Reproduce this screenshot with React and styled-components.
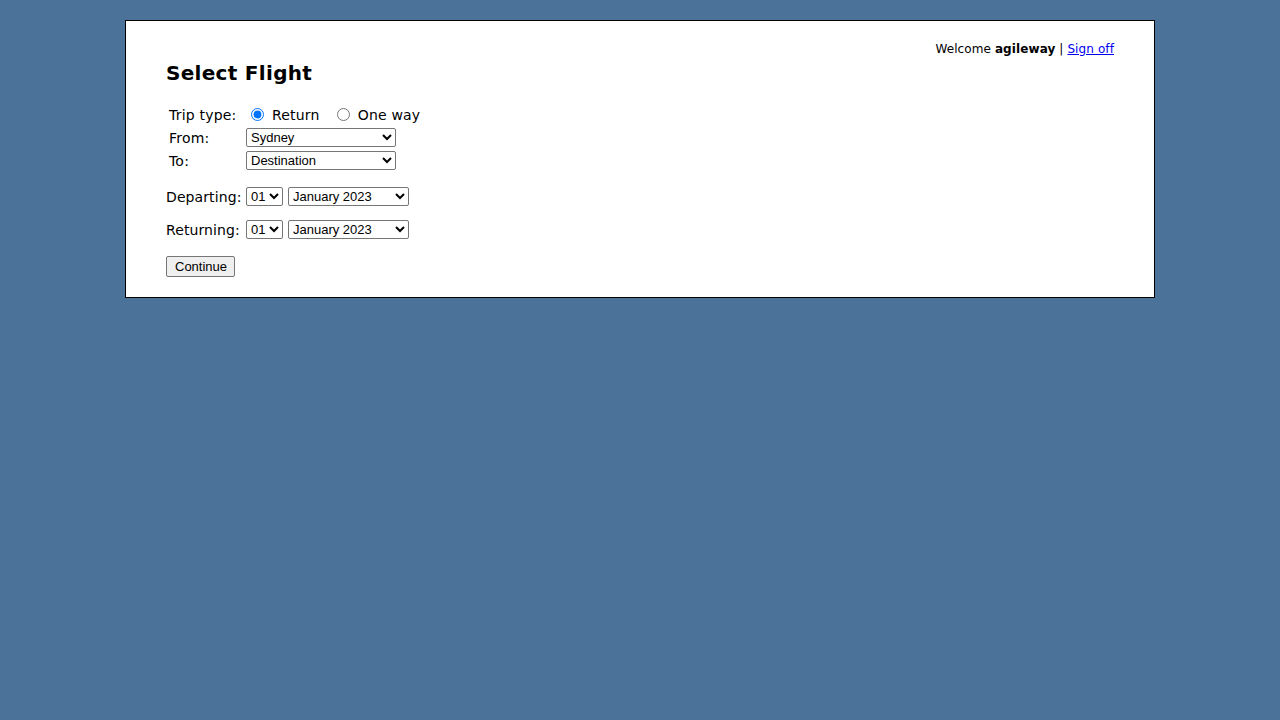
import styled, { createGlobalStyle } from 'styled-components';

const GlobalStyle = createGlobalStyle`
	body {
		margin: 0;
		padding: 20px 0;
		background: #4b7298;
		font-family: "DejaVu Sans", Verdana, sans-serif;
	}
`

const Panel = styled.div`
	width: 948px;
	margin: 0 auto;
	background: #fff;
	border: 1px solid #000;
	padding: 21px 40px 20px 40px;
`

const TopBar = styled.div`
	display: flex;
	justify-content: flex-end;
	font-size: 12px;
	line-height: 14px;
	letter-spacing: 0.1px;
	color: #000;
	a { color: #0000ee; }
	b { font-weight: bold; }
`

const Title = styled.h2`
	margin: 5px 0 17px;
	font-size: 20px;
	line-height: 24px;
	font-weight: bold;
	letter-spacing: 0.3px;
`

const FormTable = styled.table`
	border-spacing: 2px;
	margin: 0 0 14px 0;
	font-size: 14px;
	letter-spacing: 0.2px;
	td { padding: 1px; height: 19px; }
`

const LabelCell = styled.td`
	width: 68px;
	padding-right: 6px !important;
`

const RadioLabel = styled.label`
	margin-right: 12px;
	input { margin: 0 8px 0 5px; vertical-align: -1px; }
`

const Select = styled.select`
	font-family: "Liberation Sans", Arial, sans-serif;
	font-size: 13px;
	height: 19px;
	width: ${p => p.$w}px;
	padding: 0;
	margin: 0;
	border: 1px solid #767676;
	border-radius: 2px;
	background: #fff;
	color: #000;
	letter-spacing: 0;
`

const DateRow = styled.div`
	display: flex;
	align-items: center;
	gap: 5px;
	font-size: 14px;
	letter-spacing: 0.1px;
	margin-bottom: 14px;
	&:last-of-type { margin-bottom: 17px; }
`

const DateLabel = styled.span`
	width: 75px;
	white-space: nowrap;
`

const Button = styled.button`
	font-family: "Liberation Sans", Arial, sans-serif;
	font-size: 13px;
	height: 21px;
	padding: 0 7px 0 8px;
	border: 1px solid #767676;
	border-radius: 2px;
	background: #efefef;
	color: #000;
`

export default function App() {
	return (
		<>
			<GlobalStyle />
			<Panel>
				<TopBar>
					<span>Welcome <b>agileway</b> | <a href="#">Sign off</a></span>
				</TopBar>
				<Title>Select Flight</Title>
				<FormTable>
					<tbody>
						<tr>
							<LabelCell>Trip type:</LabelCell>
							<td>
								<RadioLabel><input type="radio" name="trip" defaultChecked />Return</RadioLabel>
								<RadioLabel><input type="radio" name="trip" />One way</RadioLabel>
							</td>
						</tr>
						<tr>
							<LabelCell>From:</LabelCell>
							<td><Select $w={150}><option>Sydney</option></Select></td>
						</tr>
						<tr>
							<LabelCell>To:</LabelCell>
							<td><Select $w={150}><option>Destination</option></Select></td>
						</tr>
					</tbody>
				</FormTable>
				<div>
					<DateRow>
						<DateLabel>Departing:</DateLabel>
						<Select $w={37}><option>01</option></Select>
						<Select $w={121}><option>January 2023</option></Select>
					</DateRow>
					<DateRow>
						<DateLabel>Returning:</DateLabel>
						<Select $w={37}><option>01</option></Select>
						<Select $w={121}><option>January 2023</option></Select>
					</DateRow>
				</div>
				<Button>Continue</Button>
			</Panel>
		</>
	);
}
